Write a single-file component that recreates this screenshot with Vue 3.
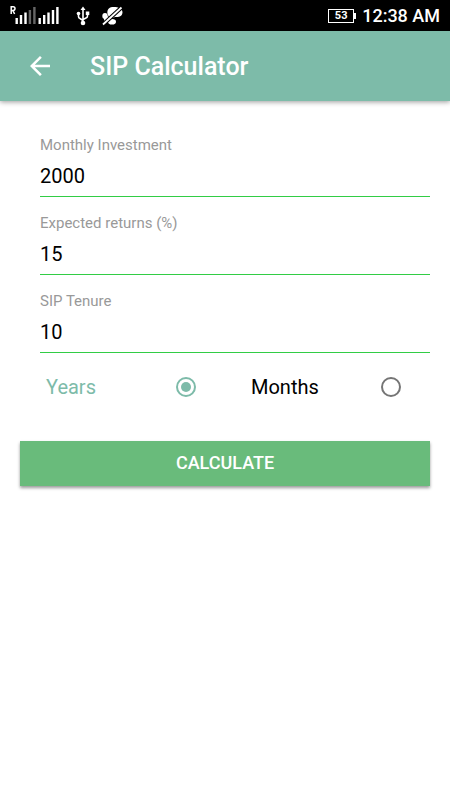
<script setup>
import { ref } from 'vue'

const fields = ref([
  { id: 'monthly', label: 'Monthly Investment', value: '2000' },
  { id: 'returns', label: 'Expected returns (%)', value: '15' },
  { id: 'tenure', label: 'SIP Tenure', value: '10' },
])
const unit = ref('Years')
const units = ['Years', 'Months']
</script>

<template>
  <div class="screen">
    <div class="status">
      <svg class="signal" width="50" height="21" viewBox="0 0 50 21" aria-hidden="true">
        <g fill="none" stroke="#fff" stroke-width="1.5">
          <path d="M1.2 9V1.8H3.2A1.7 1.7 0 0 1 3.2 5.4H1.2M2.8 5.4L4.6 9" />
        </g>
        <g fill="#fff">
          <rect x="5.5" y="13" width="2.4" height="6" />
          <rect x="9.8" y="10" width="2.4" height="9" />
          <rect x="14.3" y="7.5" width="2.4" height="11.5" />
          <rect x="28.5" y="13" width="2.4" height="6" />
          <rect x="33" y="10" width="2.4" height="9" />
          <rect x="37.3" y="7.5" width="2.4" height="11.5" />
          <rect x="41.8" y="5" width="2.4" height="14" />
          <rect x="46.2" y="2" width="2.4" height="17" />
        </g>
        <g fill="#666">
          <rect x="18.7" y="5" width="2.4" height="14" />
          <rect x="23.2" y="2" width="2.4" height="17" />
        </g>
      </svg>
      <svg class="usb" width="14" height="20" viewBox="0 0 14 20" aria-hidden="true">
        <g fill="none" stroke="#fff" stroke-width="1.6">
          <path d="M7 3V17M2.5 8V10.5Q2.5 12 4 12.5L7 14.5M11.5 7V10Q11.5 11.5 10 12L7 13.5" />
        </g>
        <g fill="#fff">
          <path d="M7 0.5L9.5 4H4.5Z" />
          <circle cx="7" cy="17" r="2.3" />
          <circle cx="2.5" cy="7.5" r="1.8" />
          <rect x="9.8" y="5.5" width="3.5" height="3.5" />
        </g>
      </svg>
      <svg class="muted" width="21" height="20" viewBox="0 0 21 20" aria-hidden="true">
        <g fill="#fff">
          <path d="M5.5 8C4.5 2.5 8.5 0.8 12 1C16 1 20.5 2.5 20.5 6.5C20 10.5 17 11.5 13 11L8 13Z" />
          <ellipse cx="3" cy="10" rx="2.7" ry="3" />
          <ellipse cx="4.5" cy="13" rx="2.5" ry="3" />
          <ellipse cx="10" cy="15.8" rx="4" ry="2.8" />
        </g>
        <path d="M1 18.5L19.5 1.5" stroke="#000" stroke-width="4" />
        <path d="M1 18.5L19.5 1.5" stroke="#fff" stroke-width="1.8" />
      </svg>
      <div class="battery"><span>53</span></div>
      <span class="time">12:38 AM</span>
    </div>

    <header class="bar">
      <button class="back" type="button" aria-label="Back">
        <svg width="20" height="20" viewBox="0 0 20 20" aria-hidden="true">
          <path d="M20 8.75H4.8L11.8 1.75L10 0L0 10L10 20L11.8 18.25L4.8 11.25H20Z" fill="#fff" />
        </svg>
      </button>
      <h1>SIP Calculator</h1>
    </header>

    <form @submit.prevent>
      <div class="fields">
        <div v-for="f in fields" :key="f.id" class="field">
          <label :for="f.id">{{ f.label }}</label>
          <input :id="f.id" v-model="f.value" type="text" inputmode="numeric" />
        </div>
      </div>
      <div class="units">
        <label v-for="u in units" :key="u" class="unit" :class="{ on: unit === u }">
          <span>{{ u }}</span>
          <input v-model="unit" type="radio" name="unit" :value="u" />
        </label>
      </div>
      <button class="calc" type="submit">CALCULATE</button>
    </form>
  </div>
</template>

<style>
body {
  background: #fff;
}
</style>

<style scoped>
.screen {
  font-family: Roboto, "Liberation Sans", sans-serif;
  color: #000;
}
.status {
  display: flex;
  align-items: center;
  height: 31px;
  padding: 0 10px;
  background: #000;
  color: #fff;
}
.usb {
  margin-left: 16px;
}
.muted {
  margin-left: 12px;
}
.battery {
  display: flex;
  align-items: center;
  justify-content: center;
  box-sizing: border-box;
  position: relative;
  width: 26px;
  height: 14px;
  margin-left: auto;
  border: 1px solid #fff;
  font-size: 11px;
  font-weight: 700;
  line-height: 14px;
}
.battery::after {
  content: "";
  position: absolute;
  top: 3px;
  right: -3px;
  width: 2px;
  height: 6px;
  background: #fff;
}
.time {
  margin-left: 8px;
  font-size: 18px;
  font-weight: 500;
  line-height: 32px;
}
.bar {
  display: flex;
  align-items: center;
  height: 70px;
  padding: 0 20px;
  background: #7dbba9;
  color: #fff;
  box-shadow: 0 1px 5px rgba(0, 0, 0, 0.4);
}
.back {
  display: flex;
  align-items: center;
  justify-content: center;
  width: 40px;
  height: 40px;
  padding: 0;
  border: 0;
  background: none;
}
h1 {
  margin: 0 0 0 30px;
  font-size: 25px;
  font-weight: 500;
  line-height: 32px;
  padding-top: 2px;
}
form {
  padding: 29px 20px;
}
.fields {
  padding-left: 20px;
}
.field {
  display: flex;
  flex-direction: column;
  padding-top: 5px;
  margin-bottom: 11px;
}
.field label {
  font-size: 15px;
  line-height: 20px;
  color: #999;
}
.field input {
  height: 42px;
  box-sizing: border-box;
  width: 100%;
  padding: 0;
  border: 0;
  border-bottom: 1px solid #32cd45;
  outline: 0;
  background: none;
  color: #000;
  font-family: inherit;
  font-size: 20px;
}
.units {
  display: grid;
  grid-template-columns: 1fr 1fr;
}
.unit {
  display: flex;
  align-items: center;
  justify-content: space-between;
  padding: 0 29px 0 26px;
  height: 46px;
  font-size: 20px;
}
.unit.on {
  color: #7dbba9;
}
.unit input {
  display: grid;
  place-items: center;
  appearance: none;
  width: 20px;
  height: 20px;
  margin: 0;
  border: 2px solid #757575;
  border-radius: 50%;
}
.unit input:checked {
  border-color: #7dbba9;
}
.unit input:checked::before {
  content: "";
  width: 10px;
  height: 10px;
  border-radius: 50%;
  background: #7dbba9;
}
.calc {
  display: block;
  width: 100%;
  height: 45px;
  margin-top: 31px;
  padding: 0 0 2px;
  border: 0;
  background: #69bb7b;
  color: #fff;
  font-family: inherit;
  font-size: 18px;
  font-weight: 500;
  box-shadow: 0 2px 3px rgba(0, 0, 0, 0.4);
}
</style>
